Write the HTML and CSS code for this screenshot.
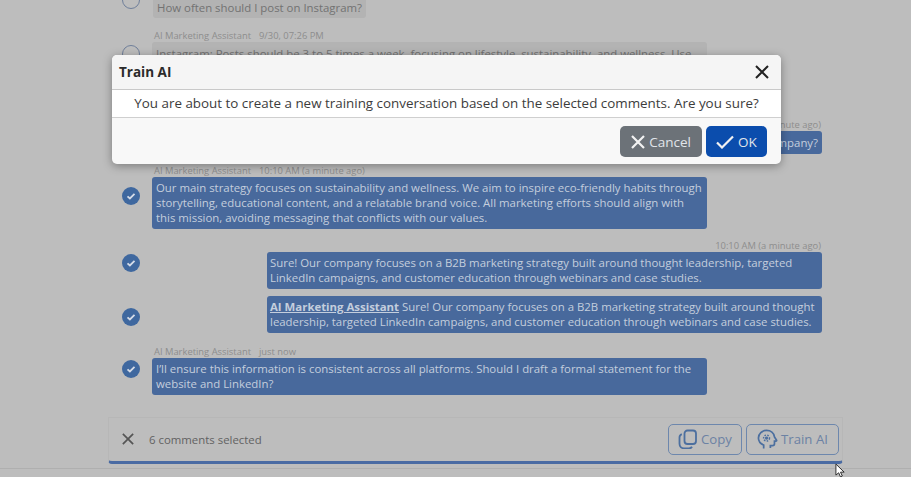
FILE: index.html
```html
<!DOCTYPE html>
<html lang="en">
<head>
<meta charset="utf-8">
<title>Train AI</title>
<link rel="stylesheet" href="styles.css">
</head>
<body>
<main class="page">
  <section class="chat">
    <div class="row row-first">
      <span class="check"></span>
      <div class="msg">
        <div class="meta">&nbsp;</div>
        <div class="bubble bubble-plain bubble-short">How often should I post on Instagram?</div>
      </div>
    </div>
    <div class="row row-hidden-gap">
      <span class="check"></span>
      <div class="msg">
        <div class="meta">AI Marketing Assistant<span class="time">9/30, 07:26 PM</span></div>
        <div class="bubble bubble-plain">Instagram: Posts should be 3 to 5 times a week, focusing on lifestyle, sustainability, and wellness. Use hashtags and stories to engage your audience.</div>
      </div>
    </div>
    <div class="row row-after-question">
      <span class="check check-on"><svg viewBox="0 0 18 18"><path d="M5.500 9.300l2.400 2.200 4.600-4.600"/></svg></span>
      <div class="msg msg-right">
        <div class="meta">10:10 AM (a minute ago)</div>
        <div class="bubble bubble-fit">What is the main strategy of your company?</div>
      </div>
    </div>
    <div class="row row-a">
      <span class="check check-on"><svg viewBox="0 0 18 18"><path d="M5.500 9.300l2.400 2.200 4.600-4.600"/></svg></span>
      <div class="msg">
        <div class="meta">AI Marketing Assistant<span class="time">10:10 AM (a minute ago)</span></div>
        <div class="bubble">Our main strategy focuses on sustainability and wellness. We aim to inspire eco-friendly habits through storytelling, educational content, and a relatable brand voice. All marketing efforts should align with this mission, avoiding messaging that conflicts with our values.</div>
      </div>
    </div>
    <div class="row row-b">
      <span class="check check-on"><svg viewBox="0 0 18 18"><path d="M5.500 9.300l2.400 2.200 4.600-4.600"/></svg></span>
      <div class="msg msg-right">
        <div class="meta">10:10 AM (a minute ago)</div>
        <div class="bubble">Sure! Our company focuses on a B2B marketing strategy built around thought leadership, targeted LinkedIn campaigns, and customer education through webinars and case studies.</div>
      </div>
    </div>
    <div class="row row-c">
      <span class="check check-on"><svg viewBox="0 0 18 18"><path d="M5.500 9.300l2.400 2.200 4.600-4.600"/></svg></span>
      <div class="msg msg-right">
        <div class="bubble"><strong class="mention">AI Marketing Assistant</strong> Sure! Our company focuses on a B2B marketing strategy built around thought leadership, targeted LinkedIn campaigns, and customer education through webinars and case studies.</div>
      </div>
    </div>
    <div class="row">
      <span class="check check-on"><svg viewBox="0 0 18 18"><path d="M5.500 9.300l2.400 2.200 4.600-4.600"/></svg></span>
      <div class="msg">
        <div class="meta">AI Marketing Assistant<span class="time">just now</span></div>
        <div class="bubble">I’ll ensure this information is consistent across all platforms. Should I draft a formal statement for the website and LinkedIn?</div>
      </div>
    </div>
  </section>

  <section class="selection-bar">
    <svg class="bar-close" viewBox="0 0 14 14"><path d="M1 1l12 12M13 1L1 13"/></svg>
    <span class="count">6 comments selected</span>
    <button class="ghost-btn ghost-copy" type="button">
      <svg viewBox="0 0 20 20"><rect x="6.500" y="1.500" width="11.500" height="13.500" rx="3"/><path d="M3.800 5.200C2.400 5.800 1.500 7 1.500 8.600v6.200c0 2.600 1.900 4.500 4.500 4.500h5c1.300 0 2.400-.6 3-1.600"/></svg>
      Copy
    </button>
    <button class="ghost-btn ghost-train" type="button">
      <svg viewBox="0 0 22 22"><path d="M7 20.500v-3.600C3.600 15.400 1.500 12.600 1.500 9.500 1.500 5 5.300 1.500 10 1.500c4.400 0 7.700 2.800 8.300 6.700l2.200 3.600c.2.400-.1.900-.6.900h-1.600v2.800c0 1.100-.9 2-2 2H14v2.500"/><circle class="gear" cx="10" cy="9.500" r="3.100"/><circle class="gear-dot" cx="10" cy="9.500" r="1.700"/></svg>
      Train AI
    </button>
  </section>
  <div class="page-foot"></div>

  <div class="modal" role="dialog" aria-label="Train AI">
    <header class="modal-head">
      <h2 class="modal-title">Train AI</h2>
      <svg class="modal-close" viewBox="0 0 14 14"><path d="M1 1l12 12M13 1L1 13"/></svg>
    </header>
    <p class="modal-body">You are about to create a new training conversation based on the selected comments. Are you sure?</p>
    <footer class="modal-foot">
      <button class="btn btn-cancel" type="button"><svg viewBox="0 0 14 14"><path d="M1 1l12 12M13 1L1 13"/></svg>Cancel</button>
      <button class="btn btn-ok" type="button"><svg class="ok-icon" viewBox="0 0 18 14"><path d="M1 7.500l5 5L17 1.500"/></svg>OK</button>
    </footer>
  </div>

  <svg class="cursor" viewBox="0 0 12 16"><path d="M1 1v12l3-2.500 2 4.500 2-1-2-4.200h4z"/></svg>
</main>
</body>
</html>
```

FILE: styles.css
```css
* { box-sizing: border-box; }
html, body { margin: 0; height: 100%; }
body {
  background: #bdbdbd;
  font-family: "Open Sans", "Noto Sans", sans-serif;
  overflow: hidden;
}
.page {
  position: relative;
  width: 911px;
  height: 477px;
  overflow: hidden;
  display: flex;
  flex-direction: column;
}
.chat {
  margin-top: -18px;
  padding: 0 89px 0 122px;
  display: flex;
  flex-direction: column;
  gap: 6px;
}
.row {
  display: flex;
  align-items: center;
  gap: 12px;
}
.row-first { margin-bottom: 4px; }
.row-hidden-gap { margin-bottom: 32px; }
.row-after-question { margin-bottom: 3px; }
.row-a { margin-bottom: 3px; }
.row-b { margin-bottom: 1px; }
.row-c .msg { padding-bottom: 5px; }
.check {
  flex: none;
  width: 18px;
  height: 18px;
  border-radius: 50%;
  border: 1.500px solid #6f7f9a;
}
.check-on {
  border: 0;
  background: #3f689f;
}
.check-on svg { display: block; width: 18px; height: 18px; }
.check-on path { fill: none; stroke: #d5dce8; stroke-width: 1.800; }
.msg {
  flex: 1;
  min-width: 0;
  display: flex;
  flex-direction: column;
  align-items: flex-start;
}
.msg-right { align-items: flex-end; }
.meta {
  height: 14px;
  padding: 1px 0 0 2px;
  font-size: 9.400px;
  line-height: 14px;
  color: #8d8d8d;
}
.msg-right .meta { padding: 1px 1px 0 0; }
.time { margin-left: 8px; }
.bubble {
  width: 555px;
  padding: 4.500px 4px 3px;
  border-radius: 3px;
  background: #48699c;
  color: #c4cedd;
  font-size: 11.400px;
  line-height: 14.800px;
}
.msg-right .bubble { padding-left: 3px; }
.bubble-fit { width: auto; }
.bubble-plain {
  background: #b3b3b3;
  color: #727272;
}
.bubble-short { width: auto; margin-left: 1px; }
.mention { text-decoration: underline; }

.selection-bar {
  flex: none;
  width: 735px;
  height: 47px;
  margin: 22px 0 0 108px;
  padding: 0 3px 0 13px;
  display: flex;
  align-items: center;
  border: 1px solid #b7b7b7;
  border-bottom: 3px solid #4a6ba3;
  border-radius: 0 0 4px 4px;
}
.bar-close { width: 12px; height: 12px; margin-right: 15px; }
.bar-close path { fill: none; stroke: #555; stroke-width: 2; }
.count { flex: 1; font-size: 11.400px; color: #626262; }
.ghost-btn {
  height: 31px;
  padding: 0;
  display: inline-flex;
  align-items: center;
  justify-content: center;
  gap: 3px;
  border: 1px solid #6d87ad;
  border-radius: 5px;
  background: transparent;
  color: #6c82a4;
  font: 13.200px "Open Sans", sans-serif;
}
.ghost-copy { width: 74px; margin-right: 4px; }
.ghost-train { width: 93px; }
.ghost-btn svg { fill: none; stroke: #4c6f9f; stroke-width: 1.800; }
.ghost-copy svg { width: 20px; height: 20px; }
.ghost-train svg { width: 21px; height: 21px; }
.ghost-train .gear { stroke-width: 1.500; stroke-dasharray: 1.600 1.400; }
.ghost-train .gear-dot { fill: #4c6f9f; stroke: none; }
.page-foot {
  flex: 1;
  margin-top: 4px;
  border-top: 1px solid #afafaf;
}

.modal {
  position: absolute;
  left: 112px;
  top: 55px;
  width: 669px;
  height: 109px;
  display: flex;
  flex-direction: column;
  border-radius: 5px;
  overflow: hidden;
  background: #f8f8f8;
  box-shadow: 0 2px 10px rgba(0, 0, 0, .35);
}
.modal-head {
  height: 35px;
  flex: none;
  padding: 0 12px 0 7px;
  display: flex;
  align-items: center;
  justify-content: space-between;
  background: #f5f5f5;
  border-bottom: 1px solid #c9c9c9;
}
.modal-title {
  margin: 0;
  font-size: 13.500px;
  font-weight: 700;
  color: #2b2b2b;
}
.modal-close { width: 14px; height: 14px; }
.modal-close path { fill: none; stroke: #222; stroke-width: 2; }
.modal-body {
  margin: 0;
  height: 28px;
  flex: none;
  border-bottom: 1px solid #cfcfcf;
  background: #fff;
  color: #3c3c3c;
  font-size: 13.400px;
  line-height: 27px;
  text-align: center;
}
.modal-foot {
  flex: 1;
  padding: 8px 14px 0 0;
  display: flex;
  justify-content: flex-end;
  align-items: flex-start;
  gap: 4px;
}
.btn {
  height: 31px;
  padding: 0;
  display: inline-flex;
  align-items: center;
  justify-content: center;
  gap: 4px;
  border: 0;
  border-radius: 5px;
  color: #e1e5ea;
  font: 13.500px "Open Sans", sans-serif;
}
.btn svg { width: 14px; height: 14px; fill: none; stroke: #f2f2f2; stroke-width: 2.200; }
.btn .ok-icon { width: 18px; }
.btn-cancel { width: 82px; background: #6c7278; }
.btn-ok { width: 61px; background: #0b4dad; }

.cursor {
  position: absolute;
  left: 835px;
  top: 463px;
  width: 11px;
  height: 15px;
}
.cursor path { fill: #fff; stroke: #222; stroke-width: 1; }
```
